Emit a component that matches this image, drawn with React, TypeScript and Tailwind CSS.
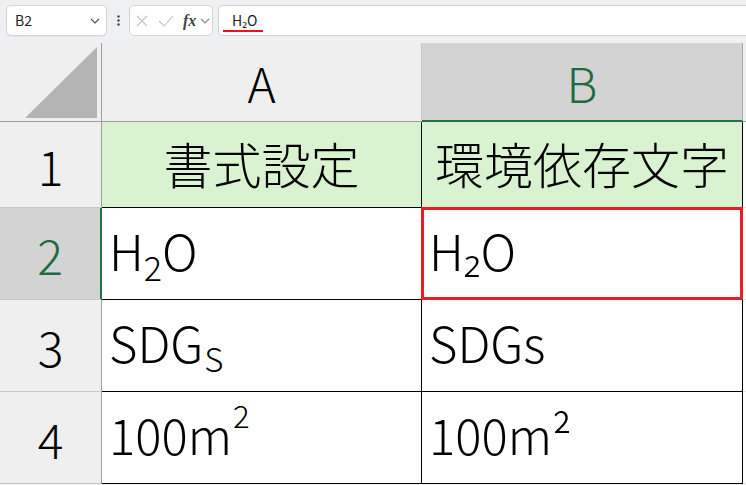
import type { ReactNode } from "react";

// Excel-style sheet: formula bar on top, 4 rows x 2 columns below.

const HEAD_BG = "bg-[#efefef]";
const HEAD_SEL = "bg-[#d3d3d3]";

function Chevron({ className = "" }: { className?: string }) {
  return (
    <svg width="10" height="6" viewBox="0 0 10 6" className={className}>
      <path d="M1 1l4 4 4-4" fill="none" stroke="currentColor" strokeWidth="1.2" />
    </svg>
  );
}

function FormulaBar() {
  return (
    <div className="flex h-[36px] items-start pt-[5px]">
      <div className="ml-[6px] flex h-[31px] w-[101px] items-center justify-between rounded-[5px] border border-[#d4d4d4] bg-white pl-[8px] pr-[6px] shadow-[0_1px_1px_rgba(0,0,0,0.04)]">
        <span className="text-[14px] text-[#222]">B2</span>
        <Chevron className="text-[#555]" />
      </div>
      <div className="flex h-[31px] w-[22px] items-center justify-center">
        <svg width="3" height="11" viewBox="0 0 3 11">
          <circle cx="1.5" cy="1.5" r="1.2" fill="#444" />
          <circle cx="1.5" cy="5.5" r="1.2" fill="#444" />
          <circle cx="1.5" cy="9.5" r="1.2" fill="#444" />
        </svg>
      </div>
      <div className="flex h-[31px] w-[84px] items-center rounded-[5px] border border-[#d4d4d4] bg-white pl-[6px]">
        <svg width="12" height="12" viewBox="0 0 12 12" className="text-[#c3c3c3]">
          <path d="M1 1l10 10M11 1L1 11" stroke="currentColor" strokeWidth="1.1" fill="none" />
        </svg>
        <svg width="16" height="12" viewBox="0 0 16 12" className="ml-[10px] text-[#c3c3c3]">
          <path d="M1 6l5 5L15 1" stroke="currentColor" strokeWidth="1.1" fill="none" />
        </svg>
        <span className="ml-[9px] font-['Liberation_Serif',serif] text-[16px] font-bold italic leading-none text-[#444]">
          fx
        </span>
        <Chevron className="ml-[4px] text-[#888]" />
      </div>
      <div className="relative ml-[5px] flex h-[31px] flex-1 items-center rounded-l-[5px] border-y border-l border-[#d0d0d0] bg-white pl-[13px]">
        <span className="text-[14px] text-[#222]">H₂O</span>
        <span className="absolute bottom-[3px] left-[4px] h-[2px] w-[40px] bg-[#e81123]" />
      </div>
    </div>
  );
}

type CellProps = {
  className?: string;
  children?: ReactNode;
};

function Cell({ className = "", children }: CellProps) {
  return <div className={`relative flex items-center ${className}`}>{children}</div>;
}

const head = "justify-center border-r border-b text-[48px] font-light leading-none";
const rowHead = `${head} ${HEAD_BG} border-r-[#9e9e9e] border-b-[#c8c8c8] text-black`;
const data = "border-r border-b border-black pl-[7px] pb-[8px] text-[49px] font-light leading-none text-black";
const title = "justify-center border-r border-b border-black bg-[#d9f2d0] pb-[4px] text-[49px] font-light leading-none";

function Sheet() {
  return (
    <div className="mt-[7px] grid grid-cols-[102px_320px_321px_1fr] grid-rows-[79px_86px_92px_92px_92px]">
      {/* header row */}
      <Cell className={`${HEAD_BG} border-r border-b border-r-[#9e9e9e] border-b-[#9e9e9e]`}>
        <svg width="100" height="78" viewBox="0 0 100 78" className="absolute inset-0">
          <polygon points="97,4 97,75 25,75" fill="#b4b4b4" />
        </svg>
      </Cell>
      <Cell className={`${head} ${HEAD_BG} border-r-[#c8c8c8] border-b-[#9e9e9e] text-black`}>A</Cell>
      <Cell className={`${head} ${HEAD_SEL} border-r-[#a8a8a8] border-b-2 border-b-[#217346] text-[#1e6b41]`}>B</Cell>
      <Cell className={`${HEAD_BG} border-b border-b-[#9e9e9e]`} />

      {/* row 1 */}
      <Cell className={rowHead}>1</Cell>
      <Cell className={title}>書式設定</Cell>
      <Cell className={title}>環境依存文字</Cell>
      <Cell className="border-b border-b-[#e2e2e2] bg-white" />

      {/* row 2 */}
      <Cell className={`${head} ${HEAD_SEL} border-r-2 border-r-[#217346] border-b-[#c8c8c8] text-[#1e6b41]`}>2</Cell>
      <Cell className={`${data} bg-white`}>
        <span>
          H<span className="relative top-[10px] text-[34px]">2</span>O
        </span>
      </Cell>
      <Cell className={`${data} bg-white`}>
        <span>H₂O</span>
        <span className="absolute -top-[1px] -left-[1px] -right-[1px] -bottom-[1px] border-[3px] border-[#ec1c24]" />
        <span className="absolute -right-[3px] -bottom-[3px] h-[4px] w-[4px] bg-[#217346]" />
      </Cell>
      <Cell className="border-b border-b-[#e2e2e2] bg-white" />

      {/* row 3 */}
      <Cell className={rowHead}>3</Cell>
      <Cell className={`${data} bg-white`}>
        <span>
          SDG<span className="relative top-[9px] ml-[1px] text-[33px]">S</span>
        </span>
      </Cell>
      <Cell className={`${data} bg-white`}>
        <span>SDGs</span>
      </Cell>
      <Cell className="border-b border-b-[#e2e2e2] bg-white" />

      {/* row 4 */}
      <Cell className={rowHead}>4</Cell>
      <Cell className={`${data} bg-white`}>
        <span>
          100m<span className="relative -top-[27px] ml-[1px] text-[31px]">2</span>
        </span>
      </Cell>
      <Cell className={`${data} bg-white`}>
        <span>100m²</span>
      </Cell>
      <Cell className="border-b border-b-[#e2e2e2] bg-white" />
    </div>
  );
}

export default function App() {
  return (
    <div className="h-[485px] w-[746px] overflow-hidden bg-[#eef0f2] font-['Noto_Sans_CJK_JP','Noto_Sans',sans-serif]">
      <FormulaBar />
      <Sheet />
    </div>
  );
}
